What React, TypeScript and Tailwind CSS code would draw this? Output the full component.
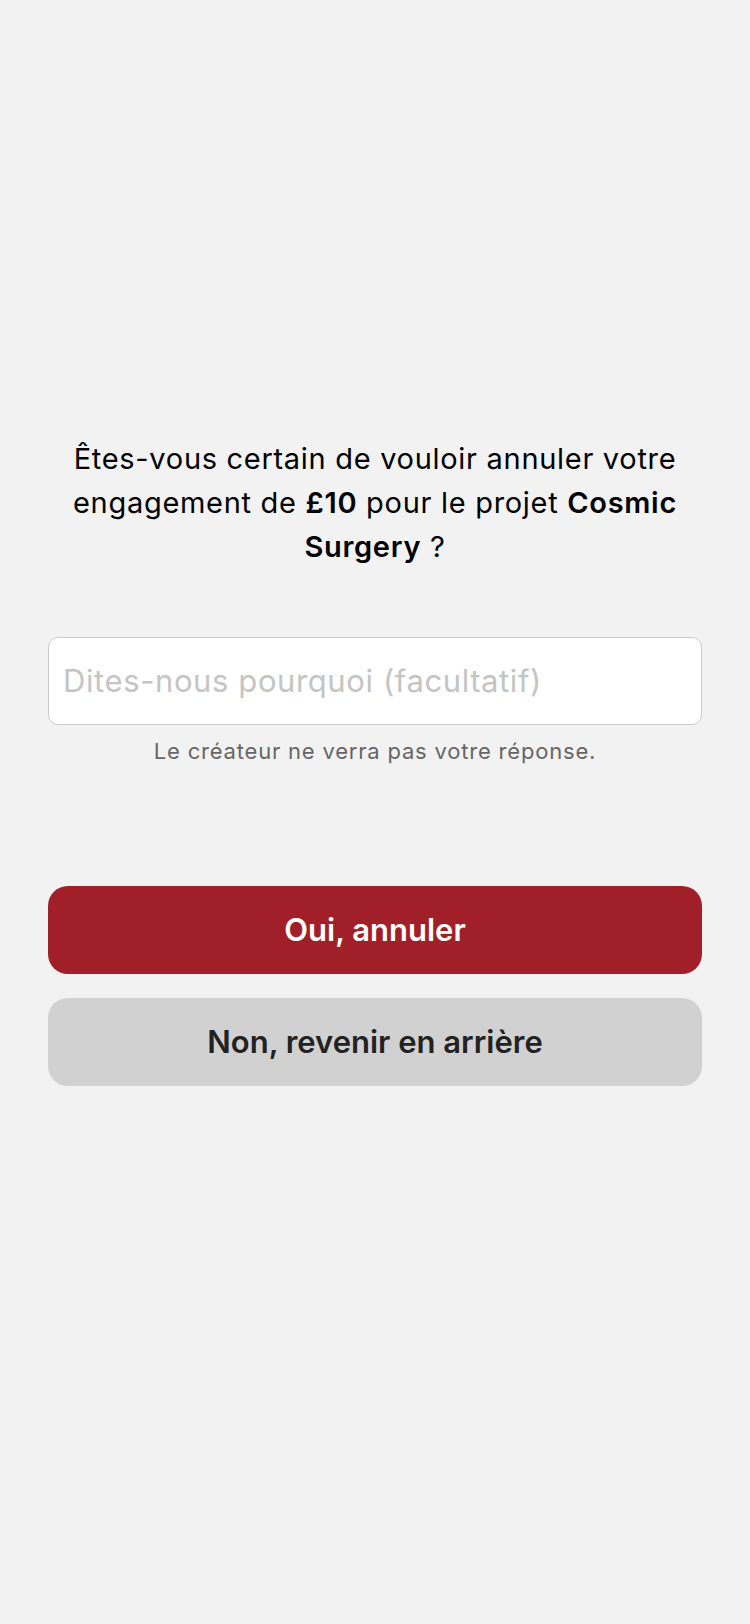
import React from "react";

export default function App() {
  return (
    <div
      className="min-h-[1624px] w-[750px] bg-[#f2f2f2] flex flex-col px-[48px]"
      style={{ fontFamily: "Inter, 'Noto Sans', sans-serif" }}
    >
      <p className="mt-[437px] text-center text-[29px] leading-[44px] tracking-[0.7px] text-black px-[4px]">
        Êtes-vous certain de vouloir annuler votre engagement de{" "}
        <span className="font-semibold">£10</span> pour le projet{" "}
        <span className="font-semibold">Cosmic Surgery</span> ?
      </p>
      <div className="mt-[68px] h-[88px] rounded-[10px] border border-[#cccccc] bg-white flex items-center px-[14px]">
        <span className="text-[31px] tracking-[0.6px] text-[#c4c4c4]">Dites-nous pourquoi (facultatif)</span>
      </div>
      <p className="mt-[11px] text-center text-[22px] leading-[30px] tracking-[0.8px] text-[#666666]">
        Le créateur ne verra pas votre réponse.
      </p>
      <button className="mt-[120px] h-[88px] rounded-[20px] bg-[#a11f28] text-white text-[31px] font-semibold">
        Oui, annuler
      </button>
      <button className="mt-[24px] h-[88px] rounded-[20px] bg-[#d1d1d1] text-[#222222] text-[31px] font-semibold">
        Non, revenir en arrière
      </button>
    </div>
  );
}
